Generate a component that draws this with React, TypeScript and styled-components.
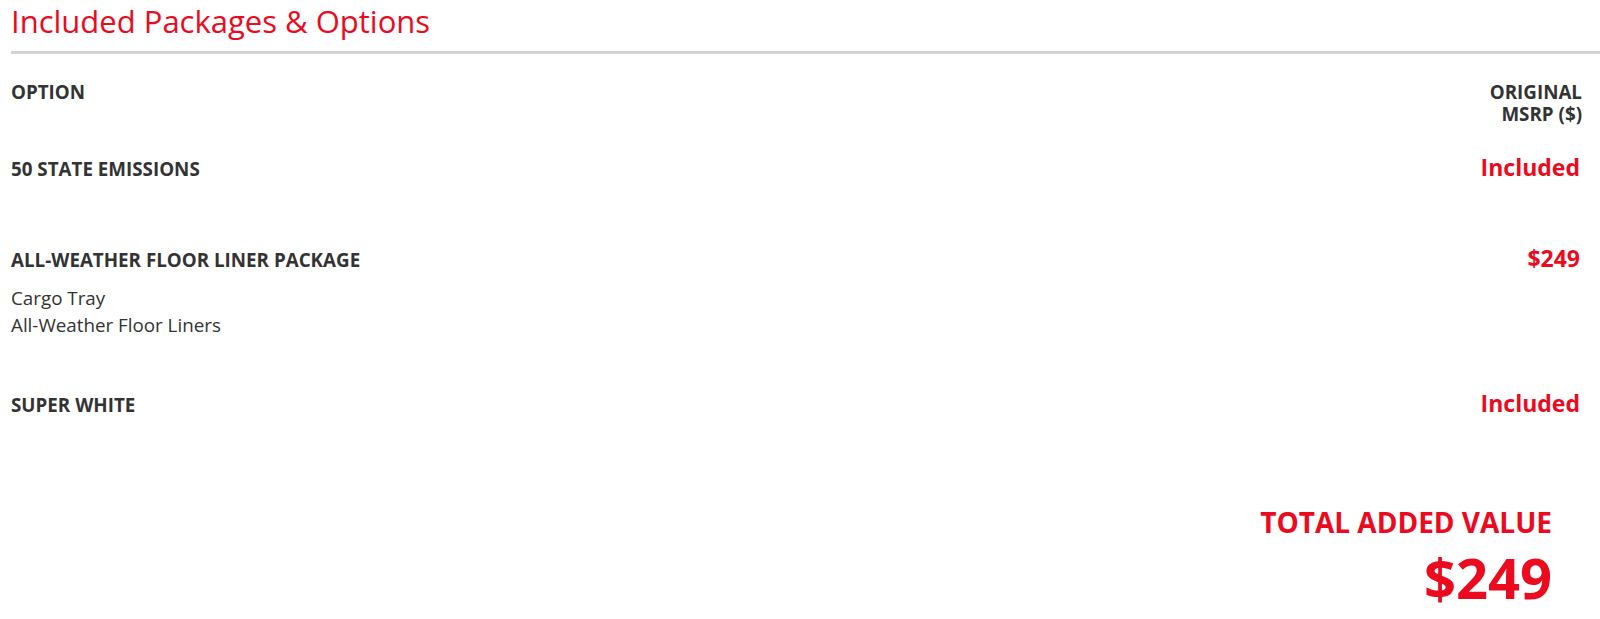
import React from "react";
import styled, { createGlobalStyle } from "styled-components";

const GlobalStyle = createGlobalStyle`
  html, body {
    margin: 0;
    padding: 0;
    background: #ffffff;
  }
  body {
    font-family: "Open Sans", "Liberation Sans", Arial, sans-serif;
    color: #333333;
  }
`;

const RED = "#eb0a1e";

const Page = styled.section`
  padding-left: 11px;
`;

const Title = styled.h2`
  margin: 0;
  padding-top: 1px;
  font-size: 31px;
  line-height: 40px;
  font-weight: 400;
  color: ${RED};
`;

const Rule = styled.hr`
  margin: 10px 0 0 0;
  border: 0;
  height: 3px;
  background: #d3d3d3;
`;

const Table = styled.div`
  padding-right: 18px;
`;

const HeaderRow = styled.div`
  display: flex;
  justify-content: space-between;
  align-items: flex-start;
  margin-top: 27px;
  margin-bottom: 28px;
`;

const HeadCell = styled.div<{ $right?: boolean }>`
  font-size: 18.8px;
  line-height: 22px;
  font-weight: 700;
  color: #333333;
  text-transform: uppercase;
  text-align: ${(p) => (p.$right ? "right" : "left")};
`;

const HeadLine = styled.span`
  display: block;
`;

const Row = styled.div`
  padding-bottom: 50px;
`;

const RowHead = styled.div`
  display: flex;
  justify-content: space-between;
  align-items: baseline;
  height: 28px;
`;

const OptionName = styled.div`
  font-size: 18.8px;
  line-height: 22px;
  font-weight: 700;
  color: #333333;
  text-transform: uppercase;
`;

const Price = styled.div`
  font-size: 23px;
  line-height: 28px;
  font-weight: 700;
  color: ${RED};
  margin-right: 2px;
`;

const Details = styled.ul`
  list-style: none;
  margin: 13px 0 0 0;
  padding: 0;
`;

const DetailItem = styled.li`
  font-size: 18.8px;
  line-height: 27px;
  font-weight: 400;
  color: #333333;
`;

const Total = styled.div`
  display: flex;
  flex-direction: column;
  align-items: flex-end;
  margin-top: 24px;
  margin-right: 30px;
`;

const TotalLabel = styled.div`
  font-size: 28px;
  line-height: 36px;
  font-weight: 700;
  color: ${RED};
  text-transform: uppercase;
`;

const TotalValue = styled.div`
  margin-top: 5px;
  font-size: 56px;
  line-height: 64px;
  font-weight: 700;
  color: ${RED};
`;

type Option = { name: string; price: string; details: string[] };

const options: Option[] = [
  { name: "50 State Emissions", price: "Included", details: [] },
  {
    name: "All-Weather Floor Liner Package",
    price: "$249",
    details: ["Cargo Tray", "All-Weather Floor Liners"],
  },
  { name: "Super White", price: "Included", details: [] },
];

export default function App() {
  return (
    <>
      <GlobalStyle />
      <Page>
        <Title>Included Packages &amp; Options</Title>
        <Rule />
        <Table>
          <HeaderRow>
            <HeadCell>Option</HeadCell>
            <HeadCell $right>
              <HeadLine>Original</HeadLine>
              <HeadLine>MSRP ($)</HeadLine>
            </HeadCell>
          </HeaderRow>
          {options.map((o) => (
            <Row key={o.name}>
              <RowHead>
                <OptionName>{o.name}</OptionName>
                <Price>{o.price}</Price>
              </RowHead>
              <Details>
                {o.details.map((d) => (
                  <DetailItem key={d}>{d}</DetailItem>
                ))}
              </Details>
            </Row>
          ))}
          <Total>
            <TotalLabel>Total Added Value</TotalLabel>
            <TotalValue>$249</TotalValue>
          </Total>
        </Table>
      </Page>
    </>
  );
}
